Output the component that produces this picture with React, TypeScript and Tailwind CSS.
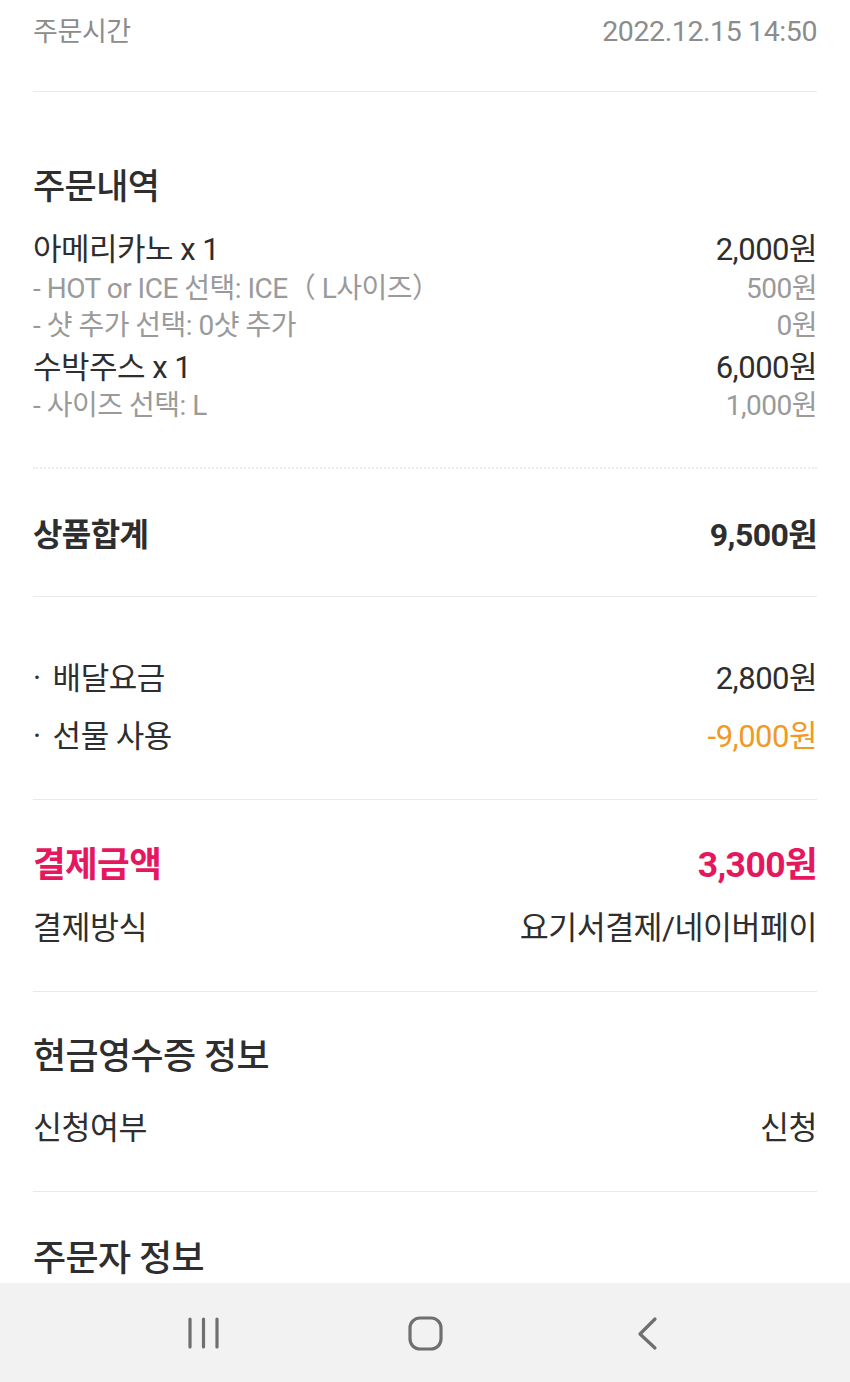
import React from "react";

const font = { fontFamily: 'Roboto, "Noto Sans CJK KR", sans-serif' };

function Row({ left, right, cls = "", h = "h-[40px]" }: { left: React.ReactNode; right: React.ReactNode; cls?: string; h?: string }) {
  return (
    <div className={`flex items-center justify-between ${h} ${cls}`}>
      <span className="whitespace-nowrap">{left}</span>
      <span className="whitespace-nowrap">{right}</span>
    </div>
  );
}

export default function App() {
  return (
    <div className="relative w-[850px] h-[1382px] overflow-hidden bg-white" style={font}>
      <div className="px-[33px]">
        <div className="flex items-center justify-between h-[64px] text-[#8c8c8c]">
          <span className="text-[27px] tracking-[-0.4px]">주문시간</span>
          <span className="text-[28.5px] tracking-[-0.4px]">2022.12.15 14:50</span>
        </div>
        <div className="mt-[27px] h-px bg-[#e9e9e9]" />

        <div className="mt-[64px] h-[64px] flex items-center text-[35px] font-medium text-[#2e2e2e] tracking-[-0.6px]">주문내역</div>

        <div className="mt-[10px]">
          <Row h="h-[40px]" cls="text-[31px] text-[#2e2e2e] tracking-[-0.5px]" left="아메리카노 x 1" right="2,000원" />
          <Row h="h-[38px]" cls="text-[28px] text-[#9a9a9a] tracking-[-0.5px]" left="- HOT or ICE 선택: ICE（ L사이즈）" right="500원" />
          <Row h="h-[36px]" cls="text-[28px] text-[#9a9a9a] tracking-[-0.5px]" left="- 샷 추가 선택: 0샷 추가" right="0원" />
          <Row h="h-[48px]" cls="text-[31px] text-[#2e2e2e] tracking-[-0.5px]" left="수박주스 x 1" right="6,000원" />
          <Row h="h-[28px]" cls="text-[28px] text-[#9a9a9a] tracking-[-0.5px]" left="- 사이즈 선택: L" right="1,000원" />
        </div>

        <div className="mt-[47px] border-t-2 border-dotted border-[#ececec]" />

        <Row h="h-[66px]" cls="mt-[33px] text-[32px] font-bold text-[#2e2e2e] tracking-[-0.6px]" left="상품합계" right="9,500원" />
        <div className="mt-[28px] h-px bg-[#e9e9e9]" />

        <div className="mt-[53px]">
          <Row h="h-[58px]" cls="text-[31px] text-[#2e2e2e] tracking-[-0.5px]" left={<><span className="mr-[12px]">·</span>배달요금</>} right="2,800원" />
          <Row h="h-[58px]" cls="text-[31px] text-[#2e2e2e] tracking-[-0.5px]" left={<><span className="mr-[12px]">·</span>선물 사용</>} right={<span className="text-[#f09a25]">-9,000원</span>} />
        </div>
        <div className="mt-[33px] h-px bg-[#e9e9e9]" />

        <Row h="h-[64px]" cls="mt-[34px] text-[35.5px] font-bold text-[#e5175f] tracking-[-0.6px]" left="결제금액" right="3,300원" />
        <Row h="h-[62px]" cls="text-[31.5px] text-[#2e2e2e] tracking-[-0.5px]" left="결제방식" right="요기서결제/네이버페이" />
        <div className="mt-[31px] h-px bg-[#e9e9e9]" />

        <div className="mt-[32px] h-[66px] flex items-center text-[36px] font-medium text-[#2e2e2e] tracking-[-0.6px]">현금영수증 정보</div>
        <Row h="h-[62px]" cls="mt-[8px] text-[31.5px] text-[#2e2e2e] tracking-[-0.5px]" left="신청여부" right="신청" />
        <div className="mt-[31px] h-px bg-[#e9e9e9]" />

        <div className="mt-[36px] h-[62px] flex items-center text-[36px] font-medium text-[#2e2e2e] tracking-[-0.6px]">주문자 정보</div>
      </div>

      <div className="absolute left-0 right-0 bottom-0 h-[99px] bg-[#f2f2f2] flex items-center justify-center">
        <svg width="850" height="99" viewBox="0 0 850 99" fill="none">
          <g stroke="#6f6f6f" strokeWidth="3.2" strokeLinecap="round" strokeLinejoin="round">
            <line x1="190" y1="36" x2="190" y2="64" />
            <line x1="203.5" y1="36" x2="203.5" y2="64" />
            <line x1="217" y1="36" x2="217" y2="64" />
            <rect x="410" y="35" width="31" height="31" rx="10" />
            <polyline points="655,36 640,51 655,65" />
          </g>
        </svg>
      </div>
    </div>
  );
}
